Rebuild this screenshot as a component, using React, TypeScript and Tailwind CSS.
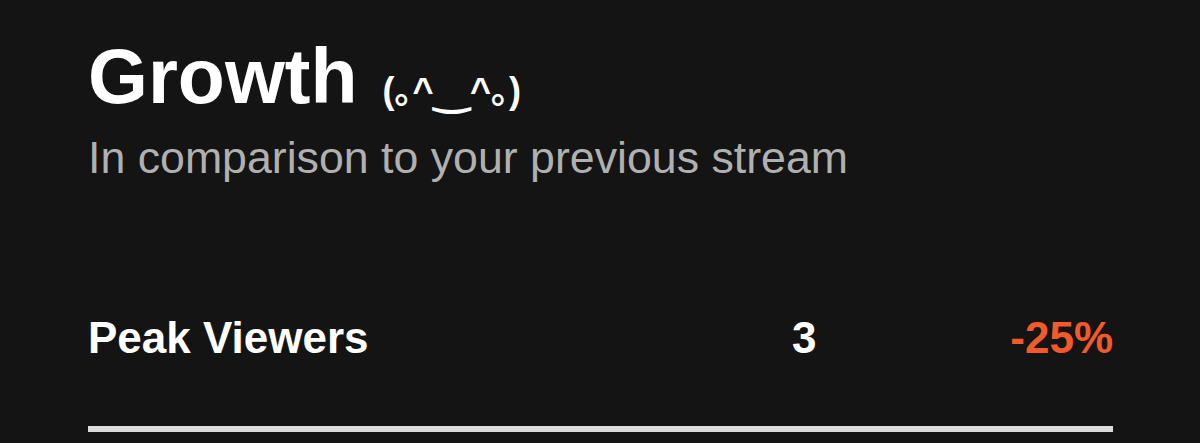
export default function App() {
  return (
    <div className="w-[1200px] h-[443px] bg-[#141414] overflow-hidden pl-[88px] pr-[87px] pt-[38px]" style={{ fontFamily: '"Liberation Sans", Arial, sans-serif' }}>
      <div className="flex items-baseline h-[77px]">
        <span className="text-[77px] leading-none font-bold text-white">Growth</span>
        <span className="ml-[25px] text-[36px] leading-none font-bold text-white" style={{ fontFamily: '"Liberation Sans", "Noto Sans CJK JP", "DejaVu Sans", sans-serif' }}>
          (｡^<span className="text-[44px] leading-none">‿</span>^｡)
        </span>
      </div>
      <div className="mt-[21px] text-[44.7px] leading-none text-[#b0b0b0]">In comparison to your previous stream</div>
      <div className="mt-[135px] flex items-baseline text-[44px] leading-none font-bold">
        <span className="flex-1 text-white">Peak Viewers</span>
        <span className="w-[121px] text-white">3</span>
        <span className="w-[200px] text-right text-[#f15a29]">-25%</span>
      </div>
      <div className="mt-[66px] h-[6px] bg-[#dcdcdc]" />
    </div>
  );
}
